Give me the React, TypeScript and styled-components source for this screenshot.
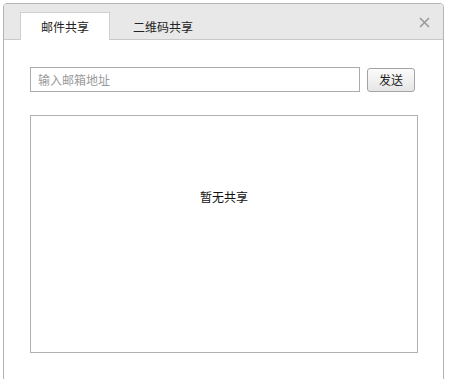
import styled, { createGlobalStyle } from "styled-components";

const GlobalStyle = createGlobalStyle`
  html, body {
    margin: 0;
    padding: 0;
    background: #ffffff;
    overflow: hidden;
  }
  body {
    font-family: "Noto Sans CJK SC", "Liberation Sans", sans-serif;
    font-size: 12px;
    color: #222;
  }
`;

const Page = styled.div`
  width: 456px;
  height: 379px;
  padding: 3px 0 0 3px;
  box-sizing: border-box;
  overflow: hidden;
`;

const Dialog = styled.div`
  width: 441px;
  height: 400px;
  box-sizing: border-box;
  border: 1px solid #b4b4b4;
  border-radius: 4px 4px 0 0;
  background: #ffffff;
  display: flex;
  flex-direction: column;
`;

const Header = styled.div`
  height: 36px;
  background: #e9e8e9;
  border-bottom: 1px solid #c9c9c9;
  border-radius: 3px 3px 0 0;
  display: flex;
  align-items: flex-end;
  padding: 0 12px 0 16px;
  box-sizing: border-box;
  flex-shrink: 0;
`;

const Tabs = styled.div`
  display: flex;
  gap: 8px;
  flex: 1;
  margin-bottom: -1px;
`;

const Tab = styled.div<{ $active?: boolean }>`
  width: 90px;
  height: 28px;
  box-sizing: border-box;
  display: flex;
  align-items: center;
  justify-content: center;
  font-size: 12px;
  color: #222;
  background: ${(p) => (p.$active ? "#ffffff" : "transparent")};
  border: 1px solid ${(p) => (p.$active ? "#cfcfcf" : "transparent")};
  border-bottom: none;
`;

const Close = styled.div`
  align-self: center;
  width: 14px;
  height: 14px;
  margin-top: 1px;
  display: flex;
  align-items: center;
  justify-content: center;
`;

const Body = styled.div`
  padding: 27px 25px 0 26px;
  display: flex;
  flex-direction: column;
  gap: 23px;
`;

const Row = styled.div`
  display: flex;
  align-items: center;
  gap: 7px;
`;

const EmailInput = styled.input`
  width: 330px;
  height: 25px;
  box-sizing: border-box;
  border: 1px solid #ababab;
  padding: 0 7px;
  font-family: "Noto Sans CJK SC", sans-serif;
  font-size: 12px;
  outline: none;
  &::placeholder {
    color: #9a9a9a;
  }
`;

const SendButton = styled.button`
  width: 48px;
  height: 24px;
  box-sizing: border-box;
  border: 1px solid #a3a3a3;
  border-radius: 3px;
  background: linear-gradient(#fbfbfb, #e6e6e6);
  font-family: "Noto Sans CJK SC", sans-serif;
  font-size: 12px;
  color: #222;
  padding: 0;
`;

const ShareBox = styled.div`
  width: 388px;
  height: 238px;
  box-sizing: border-box;
  border: 1px solid #b0b0b0;
  display: flex;
  justify-content: center;
  padding-top: 72px;
  font-size: 12px;
  color: #111;
`;

const App = () => {
  return (
    <>
      <GlobalStyle />
      <Page>
        <Dialog>
          <Header>
            <Tabs>
              <Tab $active>邮件共享</Tab>
              <Tab>二维码共享</Tab>
            </Tabs>
            <Close>
              <svg width="11" height="11" viewBox="0 0 11 11">
                <path d="M1 1 L10 10 M10 1 L1 10" stroke="#9a9a9a" strokeWidth="1.6" />
              </svg>
            </Close>
          </Header>
          <Body>
            <Row>
              <EmailInput placeholder="输入邮箱地址" />
              <SendButton>发送</SendButton>
            </Row>
            <ShareBox>暂无共享</ShareBox>
          </Body>
        </Dialog>
      </Page>
    </>
  );
};

export default App;
